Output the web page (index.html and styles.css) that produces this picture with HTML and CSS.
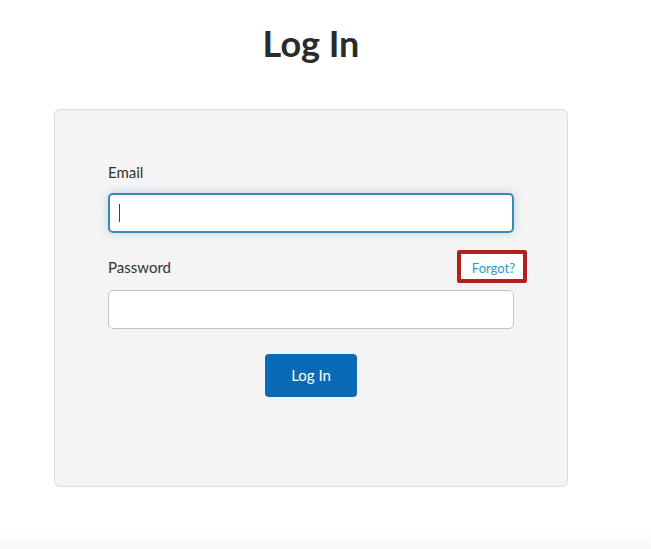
FILE: index.html
```html
<!DOCTYPE html>
<html lang="en">
<head>
  <meta charset="UTF-8">
  <meta name="viewport" content="width=device-width, initial-scale=1.0">
  <title>Log In</title>
  <link rel="stylesheet" href="styles.css">
</head>
<body>

  <div class="page">
    <h1>Log In</h1>

    <form class="login-card" onsubmit="return false">
      <label class="field-label" for="email">Email</label>
      <div class="input-wrap">
        <input type="email" id="email" class="text-input focused">
        <span class="caret"></span>
      </div>

      <div class="label-row">
        <label class="field-label" for="password">Password</label>
        <a href="#" class="forgot">Forgot?</a>
      </div>
      <input type="password" id="password" class="text-input">

      <div class="actions">
        <button type="submit" class="login-btn">Log In</button>
      </div>
    </form>
  </div>

</body>
</html>
```

FILE: styles.css
```css
html {
  height: 100%;
}
body {
  margin: 0;
  min-height: 100%;
  font-family: 'Lato', 'Liberation Sans', sans-serif;
  color: #333;
  background: linear-gradient(to bottom, #ffffff 530px, #f7f7f7 549px);
}
.page {
  width: 622px;
  padding-top: 22px;
}
h1 {
  margin: 0;
  font-size: 36px;
  line-height: 43px;
  font-weight: 700;
  color: #2b2b2b;
  text-align: center;
}
.login-card {
  width: 406px;
  margin: 44px auto 0;
  padding: 53px 53px 89px;
  background-color: #f4f4f4;
  border: 1px solid #dcdcdc;
  border-radius: 6px;
}
.field-label {
  display: block;
  font-size: 15px;
  line-height: 18px;
  color: #333;
}
.input-wrap {
  position: relative;
  margin-top: 12px;
}
.text-input {
  display: block;
  box-sizing: border-box;
  width: 406px;
  height: 39px;
  padding: 0 10px;
  font-family: inherit;
  font-size: 15px;
  background: #fff;
  border: 1px solid #c2c2c2;
  border-radius: 5px;
  outline: none;
}
.text-input.focused {
  height: 40px;
  border: 2px solid #3a89b6;
  box-shadow: 0 0 10px rgba(120, 170, 210, 0.45);
}
/* blinking caret frozen for the picture */
.caret {
  position: absolute;
  left: 11px;
  top: 11px;
  width: 1px;
  height: 18px;
  background: #444;
}
.label-row {
  display: flex;
  justify-content: space-between;
  align-items: baseline;
  margin-top: 17px;
}
.forgot {
  margin-right: -13px;
  padding: 6px 8px 3px 11px;
  font-size: 13px;
  line-height: 16px;
  color: #2a9cc4;
  text-decoration: none;
  background: #fff;
  border: 4px solid #b0221d;
  border-radius: 2px;
}
.label-row + .text-input {
  margin-top: 7px;
}
.actions {
  display: flex;
  justify-content: center;
  margin-top: 25px;
}
.login-btn {
  padding: 12px 26px;
  font-family: inherit;
  font-size: 15px;
  line-height: 19px;
  color: #fff;
  background-color: #0a6ab6;
  border: none;
  border-radius: 4px;
  cursor: pointer;
}
.login-btn:hover {
  background-color: #085a9c;
}
```
